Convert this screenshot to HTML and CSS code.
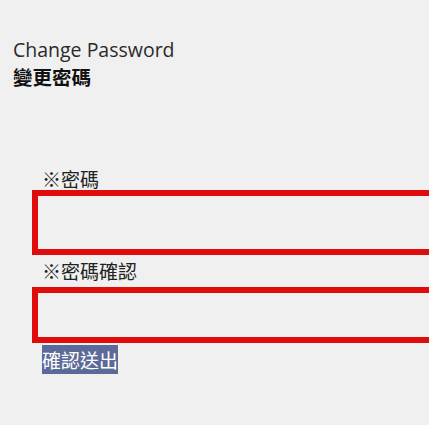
FILE: index.html
```html
<!DOCTYPE html>
<html lang="zh-Hant">
<head>
  <meta charset="UTF-8">
  <meta name="viewport" content="width=device-width, initial-scale=1.0">
  <title>Change Password</title>
  <link rel="stylesheet" href="styles.css">
</head>
<body>
  <div class="page">
    <div class="heading">
      <div class="title">Change Password</div>
      <div class="subtitle">變更密碼</div>
    </div>

    <form class="form" onsubmit="return false;">
      <label class="label label-first" for="pw">※密碼</label>
      <input class="field field-first" type="password" id="pw">

      <label class="label label-second" for="pw2">※密碼確認</label>
      <input class="field field-second" type="password" id="pw2">

      <button class="submit" type="submit">確認送出</button>
    </form>
  </div>
</body>
</html>
```

FILE: styles.css
```css
* {
  margin: 0;
  padding: 0;
  box-sizing: border-box;
}

html, body {
  overflow: hidden;
}

body {
  font-family: "Open Sans", "Noto Sans CJK TC", sans-serif;
  background: #f0f0f0;
  color: #222;
  min-height: 100vh;
}

.page {
  padding: 37px 0 0 13px;
}

.title {
  font-size: 19.5px;
  line-height: 26px;
  color: #2a2a2a;
}

.subtitle {
  font-family: "Noto Sans CJK TC", sans-serif;
  font-size: 19.5px;
  font-weight: 700;
  line-height: 26px;
  margin-top: 1px;
  color: #111;
}

.form {
  display: flex;
  flex-direction: column;
  align-items: flex-start;
  margin: 78px 0 0 19px;
}

.label {
  font-family: "Noto Sans CJK TC", sans-serif;
  font-size: 19px;
  padding-left: 10px;
  color: #222;
}

.label-first {
  line-height: 22px;
}

.label-second {
  line-height: 32px;
}

/* boxes run off the right side of the window */
.field {
  display: block;
  align-self: stretch;
  border: 6px solid #e00c0c;
  border-right: 0;
  background: #f0f0f0;
  outline: none;
}

.field-first {
  height: 65px;
}

.field-second {
  height: 56px;
}

.submit {
  font-family: "Noto Sans CJK TC", sans-serif;
  font-size: 19px;
  line-height: 29px;
  margin: 2px 0 0 10px;
  padding: 0;
  background: #5b6a99;
  color: #fff;
  border: none;
  cursor: pointer;
}
```
